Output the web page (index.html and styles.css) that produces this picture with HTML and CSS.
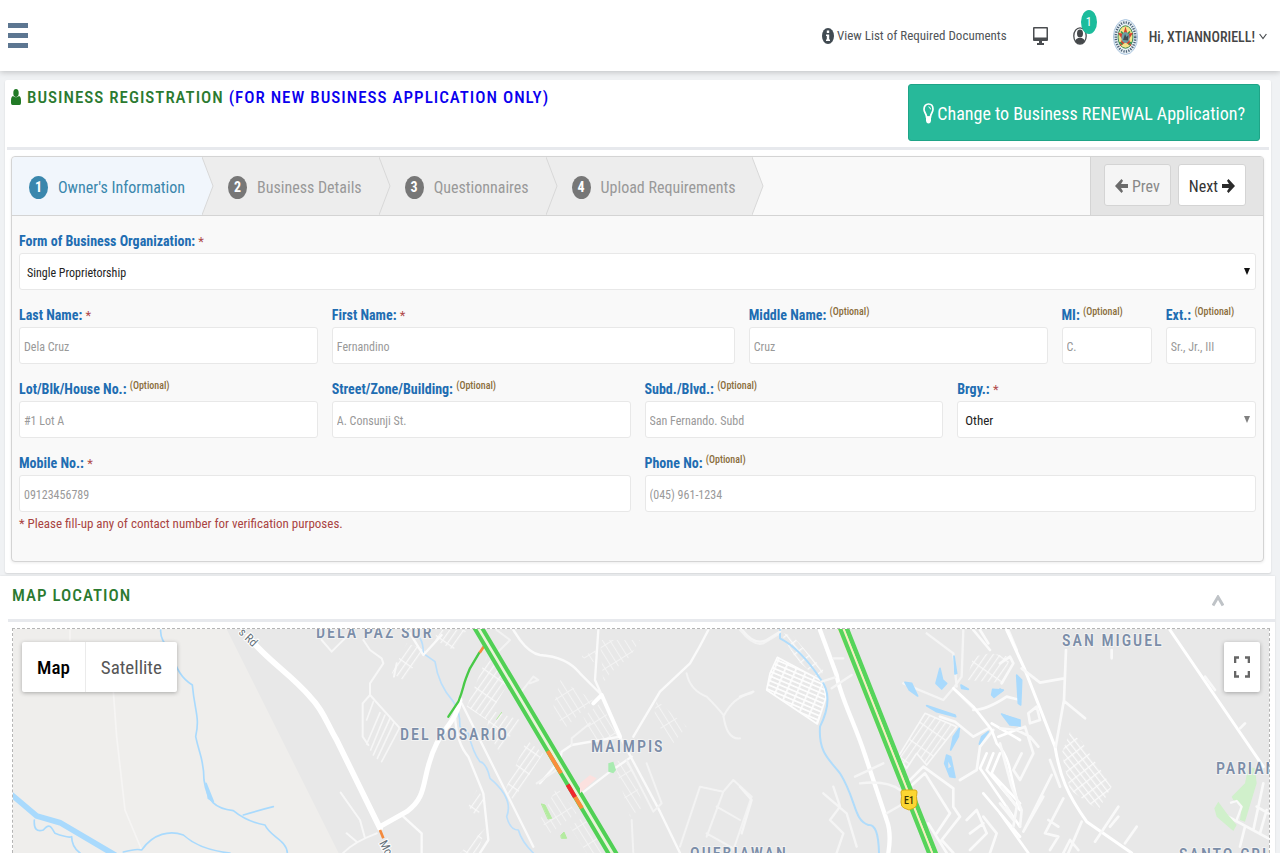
FILE: index.html
```html
<!DOCTYPE html>
<html lang="en">
<head>
<meta charset="utf-8">
<meta name="viewport" content="width=device-width, initial-scale=1">
<title>Business Registration</title>
<link rel="stylesheet" href="styles.css">
</head>
<body>
<header class="topbar">
  <button class="menu-toggle" type="button" aria-label="Toggle menu"><span></span><span></span><span></span></button>
  <nav class="topnav">
    <a class="docs-link" href="#documents">
      <svg width="12" height="16" viewBox="0 0 12 16" aria-hidden="true"><ellipse cx="6" cy="8" rx="6" ry="8" fill="#414b52"/><path d="M4.800 2.600h2.400v2.500H4.800zM4 6.500h3.200v5H8V13H4v-1.500h.8V8H4z" fill="#fff"/></svg>
      <span>View List of Required Documents</span>
    </a>
    <a class="nav-icon" href="#screen" aria-label="Display">
      <svg width="15" height="18" viewBox="0 0 15 18" aria-hidden="true"><path fill="#4a4d50" fill-rule="evenodd" d="M1 0h13q1 0 1 1v12q0 1-1 1H9v2h2v2H4v-2h2v-2H1q-1 0-1-1V1q0-1 1-1zm.5 1.500v9h12v-9z"/></svg>
    </a>
    <a class="nav-icon user-icon" href="#messages" aria-label="Messages">
      <svg width="14" height="18" viewBox="0 0 14 18" aria-hidden="true"><ellipse cx="7" cy="9" rx="6.200" ry="8.200" fill="#fff" stroke="#4a4d50" stroke-width="1.300"/><ellipse cx="7" cy="6.500" rx="3" ry="4" fill="#45484b"/><path fill="#45484b" d="M2.200 13.500q1-2 3-2.500h3.600q2 .5 3 2.500Q10 17 7 17t-4.800-3.500z"/></svg>
      <span class="badge">1</span>
    </a>
    <button class="account" type="button">
      <svg class="seal" width="25" height="36" viewBox="0 0 50 72" aria-hidden="true">
        <ellipse cx="25" cy="36" rx="24" ry="35" fill="#e8f0f4" stroke="#a9c4df" stroke-width="2"/>
        <ellipse cx="25" cy="36" rx="19.500" ry="29" fill="none" stroke="#4b6278" stroke-width="5" stroke-dasharray="2.500 2.500"/>
        <ellipse cx="25" cy="36" rx="15" ry="22.500" fill="#f4e38a" stroke="#3d8b57" stroke-width="2"/>
        <path d="M25 15l4 14 11-1-8 12 5 15-12-8-12 8 5-15-8-12 11 1z" fill="#d8402f"/>
        <ellipse cx="25" cy="37" rx="8" ry="11" fill="#6c9fa4"/>
        <path d="M20 42l4-12 3 6 4-4-1 11z" fill="#414b52"/>
        <path d="M13 46l6 5M37 46l-6 5M16 25l4 4M34 25l-4 4" stroke="#2f9550" stroke-width="3"/>
      </svg>
      <span>Hi, XTIANNORIELL!</span>
      <svg class="chev" width="8" height="7" viewBox="0 0 8 7" aria-hidden="true"><path d="M.6 1L4 5.600 7.400 1" fill="none" stroke="#4a4d50" stroke-width="1.200"/></svg>
    </button>
  </nav>
</header>

<main class="page">
  <section class="card form-card">
    <div class="card-head">
      <h1 class="title">
        <svg width="10" height="16" viewBox="0 0 10 16" aria-hidden="true"><ellipse cx="5" cy="4" rx="2.700" ry="3.900" fill="#217a26"/><path d="M2 7q3 2.500 6 0 2 .8 2 4.500v2.500q0 2-1.500 2h-7Q0 16 0 14v-2.500Q0 7.800 2 7z" fill="#217a26"/></svg>
        <span>BUSINESS REGISTRATION <span class="title-note">(FOR NEW BUSINESS APPLICATION ONLY)</span></span>
      </h1>
      <button class="renewal" type="button">
        <svg width="11" height="21" viewBox="0 0 11 21" aria-hidden="true"><path d="M3.500 14C3.500 10.500 1 9.500 1 6.300 1 3 3 1 5.500 1S10 3 10 6.300c0 3.200-2.500 4.200-2.500 7.700z" fill="none" stroke="#fff" stroke-width="1.700"/><path d="M3 13.500h5V18q-.5 2.500-2.500 2.500T3 18z" fill="#fff"/><path d="M5.500 3.800Q7.300 4 7.500 6.300" fill="none" stroke="#fff"/></svg>
        <span>Change to Business RENEWAL Application?</span>
      </button>
    </div>

    <div class="wizard">
      <div class="wizard-head">
        <ol class="steps">
          <li class="step active"><span class="num">1</span><span>Owner's Information</span><svg class="arrow" viewBox="0 0 12 58" preserveAspectRatio="none" aria-hidden="true"><path d="M0 0L11 29 0 58"/></svg></li>
          <li class="step"><span class="num">2</span><span>Business Details</span><svg class="arrow" viewBox="0 0 12 58" preserveAspectRatio="none" aria-hidden="true"><path d="M0 0L11 29 0 58"/></svg></li>
          <li class="step"><span class="num">3</span><span>Questionnaires</span><svg class="arrow" viewBox="0 0 12 58" preserveAspectRatio="none" aria-hidden="true"><path d="M0 0L11 29 0 58"/></svg></li>
          <li class="step"><span class="num">4</span><span>Upload Requirements</span><svg class="arrow" viewBox="0 0 12 58" preserveAspectRatio="none" aria-hidden="true"><path d="M0 0L11 29 0 58"/></svg></li>
        </ol>
        <div class="actions">
          <button class="btn prev" type="button" disabled>
            <svg width="13" height="14" viewBox="0 0 13 14" aria-hidden="true"><path d="M0 7L6.500 0 8 1.800 6 5h7v4H6l2 3.200L6.500 14z" fill="#6b6b6b"/></svg><span>Prev</span></button>
          <button class="btn next" type="button"><span>Next</span>
            <svg width="13" height="14" viewBox="0 0 13 14" aria-hidden="true"><path d="M13 7L6.500 0 5 1.800 7 5H0v4h7l-2 3.200L6.500 14z" fill="#2b2b2b"/></svg></button>
        </div>
      </div>

      <form class="fields">
        <div class="field w12"><label for="org">Form of Business Organization: <span class="req">*</span></label>
          <div class="select"><select id="org"><option>Single Proprietorship</option></select></div></div>
        <div class="field w3"><label for="last">Last Name: <span class="req">*</span></label><input id="last" type="text" placeholder="Dela Cruz"></div>
        <div class="field w4"><label for="first">First Name: <span class="req">*</span></label><input id="first" type="text" placeholder="Fernandino"></div>
        <div class="field w3"><label for="middle">Middle Name: <span class="opt">(Optional)</span></label><input id="middle" type="text" placeholder="Cruz"></div>
        <div class="field w1"><label for="mi">MI: <span class="opt">(Optional)</span></label><input id="mi" type="text" placeholder="C."></div>
        <div class="field w1"><label for="ext">Ext.: <span class="opt">(Optional)</span></label><input id="ext" type="text" placeholder="Sr., Jr., III"></div>
        <div class="field w3"><label for="lot">Lot/Blk/House No.: <span class="opt">(Optional)</span></label><input id="lot" type="text" placeholder="#1 Lot A"></div>
        <div class="field w3"><label for="street">Street/Zone/Building: <span class="opt">(Optional)</span></label><input id="street" type="text" placeholder="A. Consunji St."></div>
        <div class="field w3"><label for="subd">Subd./Blvd.: <span class="opt">(Optional)</span></label><input id="subd" type="text" placeholder="San Fernando. Subd"></div>
        <div class="field w3"><label for="brgy">Brgy.: <span class="req">*</span></label>
          <div class="select soft"><select id="brgy"><option>Other</option></select></div></div>
        <div class="field w6"><label for="mobile">Mobile No.: <span class="req">*</span></label><input id="mobile" type="text" placeholder="09123456789"><p class="help">* Please fill-up any of contact number for verification purposes.</p></div>
        <div class="field w6"><label for="phone">Phone No: <span class="opt">(Optional)</span></label><input id="phone" type="text" placeholder="(045) 961-1234"></div>
      </form>
    </div>
  </section>

  <section class="card map-card">
    <div class="map-head">
      <h2 class="title">MAP LOCATION</h2>
      <button class="collapse" type="button" aria-label="Collapse"><svg width="12" height="12" viewBox="0 0 12 12" aria-hidden="true"><path d="M1 10.500L6 2l5 8.500" fill="none" stroke="#bfc3c7" stroke-width="3"/></svg></button>
    </div>
    <div class="map">
      <svg class="map-art" viewBox="13 629 1256 224" preserveAspectRatio="xMidYMin slice" role="img" aria-label="Street map">
        <defs>
          <pattern id="hatchA" width="7" height="38" patternUnits="userSpaceOnUse" patternTransform="rotate(31)"><path d="M0 0V38M0 0H7" stroke="#f7f7f7" stroke-width="3"/></pattern>
          <pattern id="hatchB" width="19" height="60" patternUnits="userSpaceOnUse" patternTransform="rotate(-32)"><path d="M0 0V60M0 0H19" stroke="#f6f6f6" stroke-width="6"/></pattern>
          <pattern id="hatchC" width="30" height="13" patternUnits="userSpaceOnUse" patternTransform="rotate(23)"><path d="M0 0H30M0 0V13" stroke="#fdfdfd" stroke-width="10"/></pattern>
          <pattern id="hatchD" width="17" height="60" patternUnits="userSpaceOnUse" patternTransform="rotate(35)"><path d="M0 0V60M0 0H17" stroke="#f8f8f8" stroke-width="7"/></pattern>
          <pattern id="hatchE" width="16" height="30" patternUnits="userSpaceOnUse" patternTransform="rotate(-38)"><path d="M0 0V30M0 0H16" stroke="#fafafa" stroke-width="7"/></pattern>
        </defs>
        <rect x="0" y="620" width="1290" height="300" fill="#e8e8e8"/>
        <path d="M0 620H222L342 860H0z" fill="#efeeec"/>

        <g transform="translate(0 620) scale(.33333)" fill="none" stroke-linecap="round" stroke-linejoin="round">
          <path d="M340 215L350 350 375 570 425 690M210 30V60" stroke="#f6f5f4" stroke-width="5"/>
          <path d="M482 30Q480 60 510 90C530 150 545 175 577 195C585 280 600 290 587 350C600 410 612 420 612 480C622 545 645 565 700 572Q740 605 795 615C810 650 860 660 862 699M730 585Q780 570 820 560" stroke="#a9dafd" stroke-width="5"/>
          <path d="M618 490L640 545 625 535z" fill="#a9dafd" stroke="#a9dafd" stroke-width="5"/>
          <path d="M30 520L110 588 180 608 345 705" stroke="#a9dafd" stroke-width="17" stroke-linejoin="miter"/>
          <path d="M103 600Q100 640 130 630C150 605 155 625 165 640Q205 655 215 650Q215 680 240 699M370 696Q410 685 425 690C460 640 510 630 550 645Q600 690 690 699" stroke="#a9dafd" stroke-width="5"/>
          <path d="M745 50C800 120 870 160 930 230C970 270 980 310 1010 360L1140 625" stroke="#fff" stroke-width="17"/>
          <path d="M965 60L995 95 1050 40M1090 60L1110 90 1145 115 1150 130 1110 190 1110 225 1088 250V350L1105 375M1110 225L1200 325M1022 518L1080 600 1095 655M1040 640L1070 665M1020 710Q1050 670 1130 640M1190 130L1182 170" stroke="#f7f7f7" stroke-width="6"/>
          <path d="M1140 278L1100 372M1155 285L1112 390M1170 295L1120 405M1182 308L1132 415M1198 325L1145 425M1120 245L1100 300" stroke="#f6f6f6" stroke-width="5"/>
        </g>

        <g transform="translate(380 620) scale(.33333)" fill="none" stroke-linecap="round" stroke-linejoin="round">
          <path fill="url(#hatchD)" d="M80 70L140 90 70 180 35 160zM170 30H260L220 90 165 60zM320 110L390 180 320 300 260 260zM330 270L420 300 360 400 320 330zM440 360L490 400 400 540 375 510zM290 510L320 540 290 590 265 560zM320 620L290 699H240z"/>
          <path fill="url(#hatchB)" d="M530 500L590 580 510 640 480 600zM540 180L640 240 560 320 515 280zM610 290L660 250 720 350 640 360zM660 60L780 60 750 110 690 160 670 190zM650 90L650 130 600 110zM570 620L610 590 680 699H620zM700 420L750 430 790 560 750 590zM830 240L920 320 880 370 820 300z" opacity=".8"/>
          <path d="M120 55Q130 70 130 100L165 125Q175 195 220 245Q240 270 240 320L265 340Q280 400 300 425Q320 430 330 475C360 500 400 540 380 590Q390 630 415 630Q425 665 460 699" stroke="#bbdffb" stroke-width="5"/>
          <path d="M90 40L130 105 185 45M245 250L460 680M225 290Q230 370 265 410L310 520 325 660 300 699M70 590L125 640V699M400 30L420 60Q450 100 480 105Q560 110 600 160L665 225L720 350 840 575 900 699M655 30L645 180 665 225M985 30Q960 80 930 130L840 215 760 350M720 350L575 375 545 395 540 420 480 490M605 520L690 455 755 410" stroke="#fafafa" stroke-width="7"/>
          <path d="M530 450L470 490M920 160Q930 210 980 230Q1010 260 1030 285Q1040 360 1080 355M1030 290Q1060 230 1115 220M960 500L1030 515 1060 480 1115 530 1060 690M960 500L900 680M1030 515L980 650M980 640L1060 685M1010 560L1080 600M420 220L460 170 475 180 450 190M350 30L390 60 335 115M575 375V355L630 310M1080 30Q1120 80 1150 70L1200 40M740 420L820 575 845 550 800 430M755 600L760 699" stroke="#f3f3f3" stroke-width="6"/>
          <path d="M665 225L720 350M640 250L665 225" stroke="#fff" stroke-width="12"/>
          <path d="M0 620L80 575C150 525 120 470 170 370C195 320 230 300 240 240" stroke="#fff" stroke-width="15"/>
          <path d="M205 290L235 245Q245 220 250 200T270 145L298 98" stroke="#48c947" stroke-width="7"/>
          <path d="M299 98L312 79M0 630L10 655" stroke="#f48a3d" stroke-width="8" stroke-linecap="butt"/>
          <path d="M285 10L705 720" stroke="#e9f3d9" stroke-width="26"/>
          <path d="M275 10L700 725M298 10L718 715" stroke="#50d055" stroke-width="12"/>
          <path d="M503 393L543 460M585 530L606 565" stroke="#fb8d3b" stroke-width="12" stroke-linecap="butt"/>
          <path d="M563 494L585 531" stroke="#f0272d" stroke-width="13" stroke-linecap="butt"/>
          <path d="M600 490L630 465 650 475 600 520z" fill="#fce1df"/>
          <path d="M685 430L700 425 708 450 700 460 685 455z" fill="#a8ebb0"/>
          <path d="M485 552L495 555 515 595 505 597zM543 645L552 636 560 655 545 655zM350 298L365 277" fill="#b4eba0" stroke="#b4eba0" stroke-width="3"/>
        </g>

        <g transform="translate(740 620) scale(.33333)" fill="none" stroke-linecap="round" stroke-linejoin="round">
          <path fill="url(#hatchC)" stroke="#fdfdfd" stroke-width="5" d="M112 112L250 185 258 232 232 312 80 210 90 160z"/>
          <path fill="url(#hatchE)" d="M120 35L160 50 250 150 240 180 170 120z"/>
          <path fill="url(#hatchD)" stroke="#f8f8f8" stroke-width="5" d="M555 280L650 320 560 435 530 400 500 445 475 410z"/>
          <path fill="url(#hatchD)" d="M700 110L750 100 810 110 790 190 680 180z"/>
          <path d="M120 30V55Q180 85 240 175Q285 230 240 320C235 400 270 420 300 460C350 540 340 600 385 615Q415 610 417 699" stroke="#b0dcfb" stroke-width="6"/>
          <path d="M240 30L290 165C300 230 345 310 375 405L440 600Q455 640 445 699" stroke="#fff" stroke-width="13"/>
          <path d="M245 185L285 172M275 205L335 165M280 115H310M345 470L430 430M360 490Q440 480 480 510M440 580L500 545M0 20Q40 80 80 60L120 35M0 230L40 215M560 40L640 100 650 200M670 30L665 170 640 205M490 190L610 240 640 205 700 265M250 520L320 580 350 680M280 500L300 560 270 600 310 640 290 699M0 500L35 540 5 640" stroke="#f5f5f5" stroke-width="7"/>
          <path d="M500 490L550 440 640 505 640 560 660 590 605 660M510 500L555 460 630 580 590 640M565 610L620 699M600 290L645 305 700 350 745 325M605 660L640 699M680 600L710 570 740 640 690 690M690 640L730 610M730 590L770 640 750 699M660 480L710 450 720 380 760 330M700 30L750 90M720 30L745 70M805 30L830 90M700 270Q740 270 800 230L840 240" stroke="#fafafa" stroke-width="8"/>
          <path d="M640 205L700 260Q740 310 755 330L770 370Q800 400 810 450L835 560M755 310L840 360M740 400L720 445 840 620M760 400L740 450 840 570M780 400L755 460 840 550M730 520L840 650M775 350L840 325" stroke="#fff" stroke-width="8"/>
          <path d="M495 187L515 190 533 228 508 210zM600 145L608 180 620 190 605 207 588 190zM642 108L650 160 645 162zM663 195L685 208 665 205zM758 208L790 210 762 232 755 225zM560 257L645 285 647 290 590 275zM658 325L655 350 632 390 640 350zM745 335L718 372 725 350zM620 405L632 410 645 472 630 470 614 430zM790 285L840 300V318L815 315z" fill="#a9dafd" stroke="#a9dafd" stroke-width="5"/>
          <path d="M625 425L633 440 625 445z" fill="#e8e8e8"/>
          <path d="M302 10L600 755" stroke="#f6eebd" stroke-width="30"/>
          <path d="M295 10L582 735M314 10L601 735" stroke="#56d45b" stroke-width="14"/>
          <path d="M308 20L577 700" stroke="#f5efc2" stroke-width="6"/>
        </g>

        <g transform="translate(1000 620) scale(.33333)" fill="none" stroke-linecap="round" stroke-linejoin="round">
          <path fill="url(#hatchE)" d="M210 335L245 365 335 500 295 570 210 510 185 400z"/>
          <path d="M20 30L75 150 165 380C180 470 200 520 260 605L395 699M510 30L725 345 790 440" stroke="#fff" stroke-width="9"/>
          <path d="M198 90L192 240 167 380M65 145L120 188 192 175M195 245L255 295M245 605L205 699M285 665L355 560M330 620L355 590M410 620L375 670M190 535L135 640 175 650 150 690M150 420L180 500M155 465L70 635 130 530M615 170L645 210M720 325L735 310M335 90V115M0 130L30 110 40 130 5 190M85 280L110 260 120 300 90 310zM0 325L50 330 75 320 100 400 60 480 40 450 65 400M50 330L90 350 115 380M0 370L35 500 65 570 60 620M5 500L50 560 40 620M0 550L40 600M20 560L35 590M190 699L210 660 235 690M790 490L760 630M800 570L780 640M770 560L805 580M675 585L805 655M735 620L720 680M145 600L175 620" stroke="#f9f9f9" stroke-width="8"/>
          <path d="M0 580L85 699" stroke="#fff" stroke-width="8"/>
          <path d="M50 165L65 180 62 255 55 250zM0 207L8 212 0 217M5 282L52 300 50 315 30 315z" fill="#a9dafd" stroke="#a9dafd" stroke-width="5"/>
          <path d="M745 440L765 445 770 490 735 605 720 600 725 560 700 540 695 530 735 490zM655 545L680 580 710 615 700 633 650 590 643 565z" fill="#d0f0cb"/>
          <path d="M693 548L710 543 725 560 710 600" stroke="#f9f9f9" stroke-width="7"/>
        </g>

        <g class="labels">
          <text x="316" y="638">DELA PAZ SUR</text>
          <text x="400" y="740">DEL ROSARIO</text>
          <text x="591" y="752">MAIMPIS</text>
          <text x="1062" y="646">SAN MIGUEL</text>
          <text x="1216" y="774">PARIAN</text>
          <text x="690" y="859">QUEBIAWAN</text>
          <text x="1179" y="860">SANTO CRISTO</text>
        </g>
        <text class="road" transform="translate(238 633) rotate(44)">s Rd</text>
        <text class="road" transform="translate(379 843) rotate(62)">McArthur</text>
        <path d="M904 790h11q2 0 2 2-1 4 0 10 0 5-3 6l-5 2-5-2q-3-1-3-6 1-6 0-10 0-2 3-2z" fill="#fcd632" stroke="#d9ac17"/>
        <text class="shield" x="904" y="804">E1</text>
      </svg>
      <div class="map-types">
        <button class="type on" type="button">Map</button>
        <button class="type" type="button">Satellite</button>
      </div>
      <button class="fullscreen" type="button" aria-label="Toggle fullscreen"><svg width="16" height="22" viewBox="0 0 16 22" aria-hidden="true"><path d="M1 7V1.500h4M11 1.500h4V7M15 15v5.500h-4M5 20.500H1V15" fill="none" stroke="#666" stroke-width="2.600"/></svg></button>
    </div>
  </section>
</main>
</body>
</html>
```
FILE: styles.css
```css
* { box-sizing: border-box; }

body {
  margin: 0;
  min-height: 100vh;
  display: flex;
  flex-direction: column;
  background: #f0f2f4;
  color: #333;
  font-family: "Roboto Condensed", Roboto, "Liberation Sans", sans-serif;
  font-size: 14px;
}

button, input, select { font: inherit; color: inherit; }
button { cursor: pointer; }
svg { display: block; flex: none; }
h1, h2, p, ol { margin: 0; padding: 0; }

/* Top bar */
.topbar {
  display: flex;
  align-items: center;
  justify-content: space-between;
  height: 71px;
  padding: 0 13px 0 8px;
  background: #fff;
  box-shadow: 0 1px 6px rgba(0, 0, 0, .22);
}
.menu-toggle {
  display: grid;
  gap: 5px;
  padding: 0;
  border: 0;
  background: none;
}
.menu-toggle span { width: 20px; height: 5px; background: #5c7691; }
.topnav { display: flex; align-items: center; }
.docs-link {
  display: flex;
  align-items: center;
  gap: 3px;
  margin-right: 26px;
  color: #515559;
  font-size: 13px;
  text-decoration: none;
}
.nav-icon { position: relative; margin-right: 25px; }
.user-icon { margin-right: 26px; }
.badge {
  position: absolute;
  left: 8px;
  bottom: 11px;
  width: 16px;
  height: 24px;
  border-radius: 50%;
  background: #1cbc9c;
  color: #fff;
  font-size: 12px;
  line-height: 24px;
  text-align: center;
}
.account {
  display: flex;
  align-items: center;
  padding: 2px 0 0;
  border: 0;
  background: none;
  color: #454545;
  font-size: 14px;
  font-weight: 500;
}
.seal { margin-right: 11px; }
.chev { margin-left: 4px; }

/* Cards */
.page { flex: 1; display: flex; flex-direction: column; padding-top: 9px; }
.card { background: #fff; }
.form-card {
  margin: 0 9px 0 5px;
  padding: 0 2px 11px;
  border-radius: 2px;
  box-shadow: 0 1px 2px rgba(0, 0, 0, .12);
}
.card-head {
  display: flex;
  align-items: flex-start;
  justify-content: space-between;
  padding: 4px 9px 6px 4px;
  border-bottom: 3px solid #e7e9ed;
}
.title {
  display: flex;
  align-items: center;
  gap: 6px;
  color: #2b7a30;
  font-size: 17px;
  font-weight: 500;
  line-height: 26px;
  letter-spacing: 1px;
}
.title-note { color: #0a00ee; }
.renewal {
  display: flex;
  align-items: center;
  gap: 3px;
  height: 57px;
  padding: 2px 14px 0;
  border: 1px solid #1fa487;
  border-radius: 3px;
  background: #27b99a;
  color: #fff;
  font-size: 18px;
}

/* Wizard */
.wizard {
  margin: 6px 5px 0 4px;
  border: 1px solid #d4d4d4;
  border-radius: 4px;
  background: #f9f9f9;
  box-shadow: 0 1px 3px rgba(0, 0, 0, .08);
}
.wizard-head {
  display: flex;
  justify-content: space-between;
  height: 59px;
  border-bottom: 1px solid #d4d4d4;
}
.steps { display: flex; list-style: none; }
.step {
  position: relative;
  display: flex;
  align-items: center;
  gap: 10px;
  padding: 3px 17px 0 26px;
  background: #ededed;
  color: #999;
  font-size: 16px;
}
.step.active { padding-left: 17px; background: #f1f6fc; color: #3a87ad; border-radius: 4px 0 0; }
.arrow { position: absolute; top: 0; left: 100%; z-index: 1; width: 12px; height: 58px; }
.arrow path { fill: #ededed; stroke: #d8d8d8; }
.step.active .arrow path { fill: #f1f6fc; }
.num {
  width: 19px;
  height: 23px;
  border-radius: 50%;
  background: #777;
  color: #fff;
  font-size: 14px;
  font-weight: 700;
  line-height: 23px;
  text-align: center;
}
.active .num { background: #3a87ad; }
.actions {
  display: flex;
  gap: 7px;
  padding: 7px 17px 0 13px;
  border-left: 1px solid #d4d4d4;
  background: #e4e4e4;
}
.btn {
  display: flex;
  align-items: center;
  gap: 4px;
  height: 42px;
  padding: 2px 10px 0;
  border: 1px solid #d4d4d4;
  border-radius: 3px;
  background: #fff;
  color: #333;
  font-size: 16px;
}
.prev { background: #f5f5f5; color: #888; }

/* Form */
.fields {
  display: grid;
  grid-template-columns: repeat(12, minmax(0, 1fr));
  gap: 14px;
  padding: 14px 7px 25px;
}
.field { display: flex; flex-direction: column; }
.w1 { grid-column: span 1; }
.w3 { grid-column: span 3; }
.w4 { grid-column: span 4; }
.w6 { grid-column: span 6; }
.w12 { grid-column: span 12; }
.field label {
  height: 23px;
  line-height: 23px;
  color: #216db2;
  font-weight: 700;
  white-space: nowrap;
}
.req { color: #b04a4a; font-size: 13px; font-weight: 400; }
.opt { color: #8a6d3b; font-size: 10px; font-weight: 500; line-height: 1; vertical-align: 5px; }
.field input, .field select {
  width: 100%;
  height: 37px;
  padding: 2px 4px 0;
  border: 1px solid #e8e8e8;
  border-radius: 3px;
  background: #fff;
  font-size: 12px;
}
.field input::placeholder { color: #999; opacity: 1; }
.field select { appearance: none; padding-left: 7px; }
.select { position: relative; color: #222; }
.select::after {
  content: "";
  position: absolute;
  top: 15px;
  right: 6px;
  border: 3px solid transparent;
  border-top: 7px solid #111;
  border-bottom: 0;
}
.soft::after { border-top-color: #808080; }
.field .soft select { font-size: 13px; }
.help { color: #a94442; font-size: 13px; line-height: 24px; }

/* Map */
.map-card {
  flex: 1;
  display: flex;
  flex-direction: column;
  margin: 3px 5px 0 0;
  padding: 0 0 0 8px;
  box-shadow: 0 0 2px rgba(0, 0, 0, .1);
}
.map-head {
  display: flex;
  align-items: center;
  justify-content: space-between;
  height: 46px;
  padding: 0 51px 5px 4px;
  border-bottom: 3px solid #e7e9ed;
}
.collapse { padding: 12px 0 0; border: 0; background: none; }
.map {
  position: relative;
  flex: 1;
  min-height: 220px;
  margin: 6px 5px 0 4px;
  border: 1px dashed #b5b5b5;
  border-bottom: 0;
  overflow: hidden;
}
.map-art { position: absolute; inset: 0; width: 100%; height: 100%; }
.labels text {
  fill: #7b8da8;
  stroke: #f2f2f2;
  stroke-width: 2px;
  paint-order: stroke;
  font-size: 16px;
  font-weight: 500;
  letter-spacing: 2px;
}
.road { fill: #66727c; font-size: 12px; stroke: #fff; stroke-width: 2px; paint-order: stroke; }
.shield { fill: #3a3200; font-size: 10px; font-weight: 500; }
.map-types {
  position: absolute;
  top: 13px;
  left: 9px;
  display: flex;
  border-radius: 2px;
  background: #fff;
  box-shadow: 0 1px 4px rgba(0, 0, 0, .3);
}
.type {
  height: 50px;
  padding: 0 15px;
  border: 0;
  background: none;
  color: #565656;
  font-size: 19px;
}
.type.on { border-right: 1px solid #ebebeb; color: #000; font-weight: 500; }
.fullscreen {
  position: absolute;
  top: 13px;
  right: 9px;
  display: flex;
  align-items: center;
  justify-content: center;
  width: 36px;
  height: 50px;
  padding: 0;
  border: 0;
  border-radius: 2px;
  background: #fff;
  box-shadow: 0 1px 4px rgba(0, 0, 0, .3);
}
```
